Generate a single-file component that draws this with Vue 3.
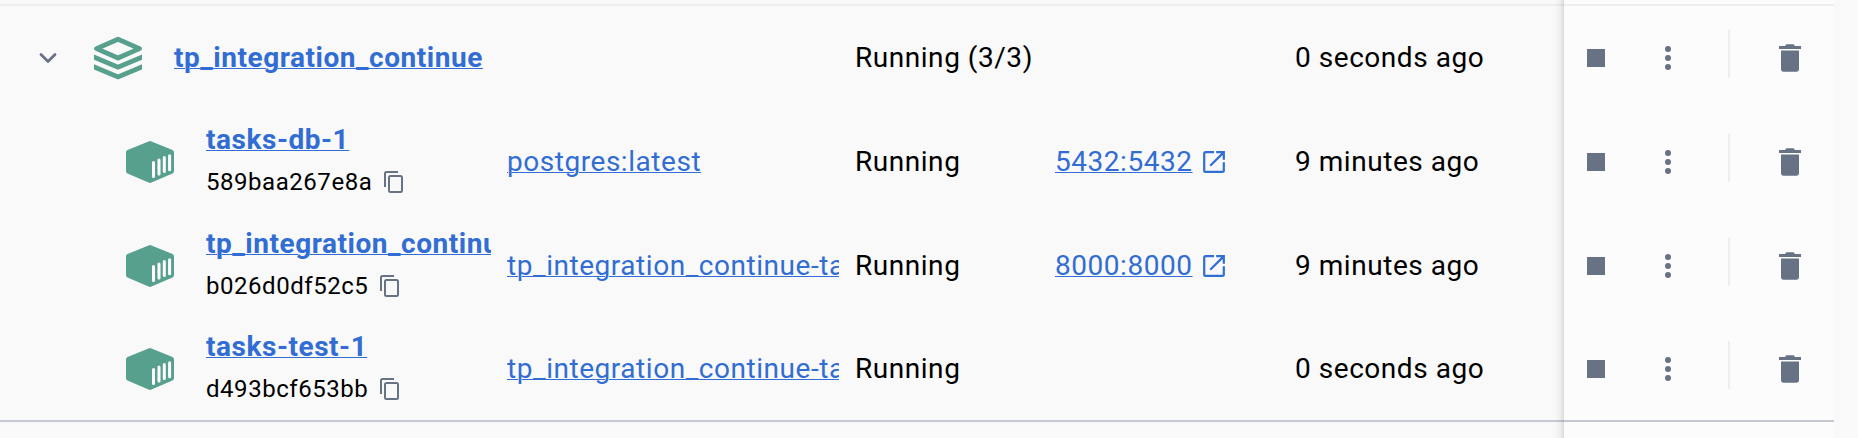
<script setup>
const rows = [
  { group: true, name: 'tp_integration_continue', status: 'Running (3/3)', started: '0 seconds ago' },
  { name: 'tasks-db-1', id: '589baa267e8a', image: 'postgres:latest', status: 'Running', port: '5432:5432', started: '9 minutes ago' },
  { name: 'tp_integration_continue', id: 'b026d0df52c5', image: 'tp_integration_continue-ta', status: 'Running', port: '8000:8000', started: '9 minutes ago' },
  { name: 'tasks-test-1', id: 'd493bcf653bb', image: 'tp_integration_continue-ta', status: 'Running', started: '0 seconds ago' },
]
</script>

<template>
  <div class="page">
    <div class="table">
      <div class="edge"><div class="cells"></div><div class="actions"></div></div>
      <div v-for="(row, i) in rows" :key="i" class="row" :class="{ last: i === rows.length - 1 }">
        <div class="cells" :class="row.group ? 'group' : 'child'">
          <svg v-if="row.group" class="chevron" width="20" height="14" viewBox="0 0 20 14">
            <path d="M3 3.5 10 10.5 17 3.5" fill="none" stroke="#677285" stroke-width="2.8" stroke-linecap="round" stroke-linejoin="round" />
          </svg>
          <svg v-if="row.group" class="type" width="48" height="44" viewBox="0 0 48 44" fill="none" stroke="#58a08e" stroke-width="4.8">
            <path d="M2.5 12.6 24 3.2 45.5 12.6 24 22Z" stroke-linejoin="round" />
            <path d="M-2 20.2 24 31.2 50 20.2M-2 30 24 41 50 30" />
          </svg>
          <svg v-else class="type" width="48" height="44" viewBox="0 0 48 44">
            <path d="M22.5 1.4Q24 .6 25.5 1.4L46.5 10Q48 10.8 48 12.5V31Q48 32.7 46.5 33.5L25.5 42.6Q24 43.4 22.5 42.6L1.5 33.5Q0 32.7 0 31V12.5Q0 10.8 1.5 10Z" fill="#58a08e" />
            <path d="M27.5 22.5V36.5M33 20V34M38.3 17.5V31.5M43.6 15.7V29.7" stroke="#fff" stroke-width="3" stroke-linecap="round" />
          </svg>
          <div class="name">
            <a class="link strong">{{ row.name }}</a>
            <div v-if="row.id" class="id">
              <span>{{ row.id }}</span>
              <svg width="20" height="22" viewBox="0 0 20 22" fill="none" stroke="#677285" stroke-width="2">
                <path d="M1 16V2.5Q1 1 2.5 1H14" />
                <rect x="5" y="5" width="13" height="16" rx="1.5" />
              </svg>
            </div>
          </div>
          <div class="image"><a v-if="row.image" class="link">{{ row.image }}</a></div>
          <div>{{ row.status }}</div>
          <div class="port">
            <template v-if="row.port">
              <a class="link">{{ row.port }}</a>
              <svg width="22" height="22" viewBox="0 0 22 22" fill="none" stroke="#316dd3" stroke-width="2.2">
                <path d="M11 1.2H2.6Q1.2 1.2 1.2 2.6V19.4Q1.2 20.8 2.6 20.8H19.4Q20.8 20.8 20.8 19.4V11.2M13.2 1.2H20.8V8.8M20.4 1.6 7.2 14.8" />
              </svg>
            </template>
          </div>
          <div>{{ row.started }}</div>
        </div>
        <div class="actions">
          <span class="stop"></span>
          <svg class="dots" width="6" height="24" viewBox="0 0 6 24" fill="#677285">
            <circle cx="3" cy="3" r="3" /><circle cx="3" cy="12" r="3" /><circle cx="3" cy="21" r="3" />
          </svg>
          <span class="divider"></span>
          <svg width="22" height="28" viewBox="0 0 22 28" fill="#677285">
            <path d="M0 2H6L7.4.3H14.6L16 2H22V5H0ZM2 6.4H20V25Q20 27.7 17.3 27.7H4.7Q2 27.7 2 25Z" />
          </svg>
        </div>
      </div>
      <div class="tail"><div class="cells"></div><div class="actions"></div></div>
    </div>
  </div>
</template>

<style scoped>
.page {
  width: 1858px;
  height: 438px;
  overflow: hidden;
  background: #f9f9fa;
  color: #000;
  font: 28px/40px Roboto, sans-serif;
  letter-spacing: 0.54px;
  white-space: nowrap;
}
.table { width: 1834px; }
.edge, .row, .tail {
  display: grid;
  grid-template-columns: 1564px 270px;
}
.edge { height: 6px; box-sizing: border-box; }
.edge > div { border-bottom: 2px solid #eeeeef; }
.row { height: 104px; }
.last > div { border-bottom: 2px solid #c4c8d1; }
.tail { height: 16px; }
.row .cells {
  display: grid;
  align-items: center;
}
.group { grid-template-columns: 94px 80px 681px 0 200px 240px 1fr; }
.group .image { width: 0; }
.child { grid-template-columns: 206px 301px 348px 200px 240px 1fr; }
.chevron { margin-left: 38px; }
.child .type { margin-left: 126px; }
.type { display: block; }
.child .name { width: 285px; overflow: hidden; }
.child .name > .link { display: block; width: max-content; }
.image { width: 332px; overflow: hidden; }
.link {
  color: #316dd3;
  text-decoration: underline;
  text-decoration-thickness: 1px;
  text-underline-offset: 1px;
}
.strong { font-weight: 700; }
.id {
  display: flex;
  align-items: center;
  gap: 12px;
  height: 44px;
  font-size: 24px;
}
.port { display: flex; align-items: center; gap: 10px; }
.actions {
  position: relative;
  display: flex;
  align-items: center;
  background: #fcfcfd;
}
.actions::before {
  content: '';
  position: absolute;
  right: 100%;
  top: 0;
  bottom: 0;
  width: 10px;
  background: linear-gradient(to left, rgba(0, 0, 0, 0.12), rgba(0, 0, 0, 0.04) 40%, transparent);
}
.edge .actions::before,
.last .actions::before { bottom: -2px; }
.stop { width: 18px; height: 18px; margin: 0 60px 0 23px; background: #677285; }
.divider { width: 2px; height: 48px; margin: 0 49px 8px 57px; background: #eeeeef; }
</style>
